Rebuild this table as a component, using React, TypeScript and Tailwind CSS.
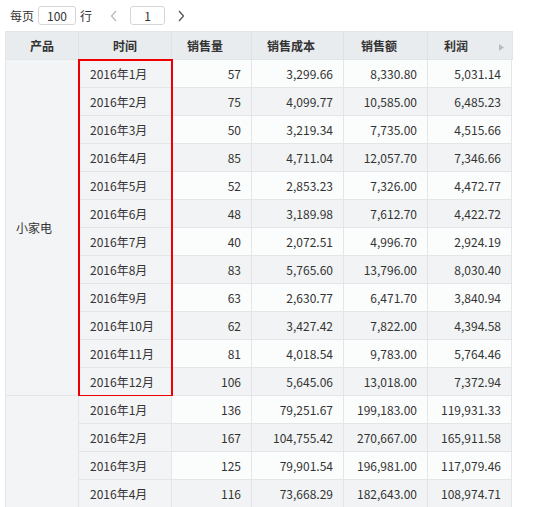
import React from "react";

type Row = { t: string; q: string; c: string; s: string; p: string };

const g1: Row[] = [
  { t: "2016年1月", q: "57", c: "3,299.66", s: "8,330.80", p: "5,031.14" },
  { t: "2016年2月", q: "75", c: "4,099.77", s: "10,585.00", p: "6,485.23" },
  { t: "2016年3月", q: "50", c: "3,219.34", s: "7,735.00", p: "4,515.66" },
  { t: "2016年4月", q: "85", c: "4,711.04", s: "12,057.70", p: "7,346.66" },
  { t: "2016年5月", q: "52", c: "2,853.23", s: "7,326.00", p: "4,472.77" },
  { t: "2016年6月", q: "48", c: "3,189.98", s: "7,612.70", p: "4,422.72" },
  { t: "2016年7月", q: "40", c: "2,072.51", s: "4,996.70", p: "2,924.19" },
  { t: "2016年8月", q: "83", c: "5,765.60", s: "13,796.00", p: "8,030.40" },
  { t: "2016年9月", q: "63", c: "2,630.77", s: "6,471.70", p: "3,840.94" },
  { t: "2016年10月", q: "62", c: "3,427.42", s: "7,822.00", p: "4,394.58" },
  { t: "2016年11月", q: "81", c: "4,018.54", s: "9,783.00", p: "5,764.46" },
  { t: "2016年12月", q: "106", c: "5,645.06", s: "13,018.00", p: "7,372.94" },
];

const g2: Row[] = [
  { t: "2016年1月", q: "136", c: "79,251.67", s: "199,183.00", p: "119,931.33" },
  { t: "2016年2月", q: "167", c: "104,755.42", s: "270,667.00", p: "165,911.58" },
  { t: "2016年3月", q: "125", c: "79,901.54", s: "196,981.00", p: "117,079.46" },
  { t: "2016年4月", q: "116", c: "73,668.29", s: "182,643.00", p: "108,974.71" },
];

function DataRow({ r, i }: { r: Row; i: number }) {
  const bg = i % 2 === 0 ? "bg-[#fbfcfc]" : "bg-[#f1f3f4]";
  return (
    <div className={`flex h-[28px] border-b border-[#e3e6e9] ${bg}`}>
      <div className="w-[93px] shrink-0 border-r border-[#e3e6e9] pl-[11px] flex items-center bg-[#f3f4f6]">
        {r.t}
      </div>
      <div className="w-[80px] shrink-0 border-r border-[#e3e6e9] pr-[10px] flex items-center justify-end">
        {r.q}
      </div>
      <div className="w-[92px] shrink-0 border-r border-[#e3e6e9] pr-[10px] flex items-center justify-end">
        {r.c}
      </div>
      <div className="w-[84px] shrink-0 border-r border-[#e3e6e9] pr-[10px] flex items-center justify-end">
        {r.s}
      </div>
      <div className="w-[84px] shrink-0 border-r border-[#e3e6e9] pr-[10px] flex items-center justify-end">
        {r.p}
      </div>
    </div>
  );
}

function Group({ name, rows, highlight, last }: { name: string; rows: Row[]; highlight?: boolean; last?: boolean }) {
  return (
    <div className="flex relative">
      <div
        className={`w-[74px] shrink-0 bg-[#f3f4f6] border-r border-l border-[#e3e6e9] flex items-center pl-[10px] ${
          last ? "" : "border-b"
        }`}
      >
        {name}
      </div>
      <div className="flex flex-col">
        {rows.map((r, i) => (
          <DataRow key={i} r={r} i={i} />
        ))}
      </div>
      {highlight && (
        <div className="absolute left-[73px] top-[-1px] bottom-[-1px] w-[95px] border-2 border-[#ee0000] pointer-events-none" />
      )}
    </div>
  );
}

export default function App() {
  return (
    <div
      className="w-[541px] h-[507px] overflow-hidden bg-white text-[12px] text-[#333]"
      style={{ fontFamily: '"Noto Sans CJK SC", "Noto Sans", sans-serif' }}
    >
      <div className="h-[31px] flex items-center pl-[10px]">
        <span>每页</span>
        <div className="ml-[4px] w-[38px] h-[19px] border border-[#d4d7da] rounded-[3px] flex items-center justify-center">
          100
        </div>
        <span className="ml-[4px]">行</span>
        <svg className="ml-[18px]" width="8" height="12" viewBox="0 0 8 12">
          <path d="M6 1 L1.5 6 L6 11" fill="none" stroke="#b8bcc0" strokeWidth="1.3" />
        </svg>
        <div className="ml-[12px] w-[35px] h-[19px] border border-[#d4d7da] rounded-[3px] flex items-center justify-center">
          1
        </div>
        <svg className="ml-[12px]" width="8" height="12" viewBox="0 0 8 12">
          <path d="M2 1 L6.5 6 L2 11" fill="none" stroke="#555" strokeWidth="1.3" />
        </svg>
      </div>
      <div className="ml-[5px] w-[508px]">
        <div className="flex h-[29px] bg-[#e9ecef] border border-[#e3e6e9] font-semibold text-[#333]">
          <div className="w-[73px] shrink-0 border-r border-[#dfe2e5] flex items-center justify-center">产品</div>
          <div className="w-[93px] shrink-0 border-r border-[#dfe2e5] flex items-center justify-center">时间</div>
          <div className="w-[80px] shrink-0 border-r border-[#dfe2e5] flex items-center pl-[15px]">销售量</div>
          <div className="w-[92px] shrink-0 border-r border-[#dfe2e5] flex items-center pl-[15px]">销售成本</div>
          <div className="w-[84px] shrink-0 border-r border-[#dfe2e5] flex items-center pl-[17px]">销售额</div>
          <div className="w-[83px] shrink-0 flex items-center pl-[16px] relative">
            利润
            <svg className="absolute right-[7px] top-[12px]" width="5" height="7" viewBox="0 0 5 7">
              <path d="M0 0 L5 3.5 L0 7 Z" fill="#b9bdc1" />
            </svg>
          </div>
        </div>
        <Group name="小家电" rows={g1} highlight />
        <Group name="" rows={g2} last />
      </div>
    </div>
  );
}
